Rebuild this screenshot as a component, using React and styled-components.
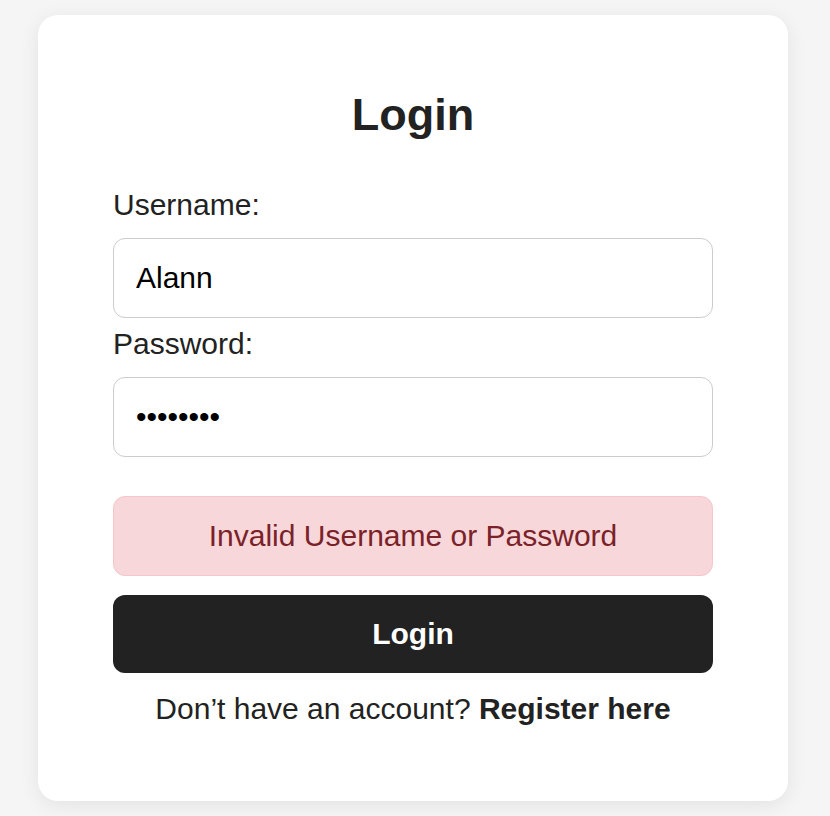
import React, { useState } from "react";
import styled, { createGlobalStyle } from "styled-components";

const GlobalStyle = createGlobalStyle`
  html, body {
    margin: 0;
    padding: 0;
    background: #f5f5f5;
    font-family: "Liberation Sans", Arial, sans-serif;
  }
  * {
    box-sizing: border-box;
  }
`;

const Page = styled.div`
  min-height: 100vh;
  padding: 15px 0 15px 38px;
`;

const Card = styled.div`
  width: 750px;
  background: #ffffff;
  border-radius: 20px;
  box-shadow: 0 4px 20px rgba(0, 0, 0, 0.08);
  padding: 74px 75px 75px;
  color: #222222;
`;

const Title = styled.h2`
  margin: 0 0 47px;
  text-align: center;
  font-size: 45px;
  font-weight: bold;
`;

const Form = styled.form`
  display: flex;
  flex-direction: column;
`;

const Label = styled.label`
  display: block;
  font-size: 30px;
  margin-bottom: 16px;
`;

const Input = styled.input`
  width: 100%;
  height: 80px;
  padding: 0 22px;
  border: 1px solid #cccccc;
  border-radius: 12px;
  font-family: inherit;
  font-size: 30px;
  color: #000000;
  margin-bottom: ${({ $gap }) => $gap}px;
  outline: none;
`;

const ErrorBox = styled.div`
  height: 80px;
  display: flex;
  align-items: center;
  justify-content: center;
  background: #f8d7da;
  border: 1px solid #f5c6cb;
  border-radius: 12px;
  color: #7a2228;
  font-size: 30px;
  margin-bottom: 19px;
`;

const Button = styled.button`
  height: 78px;
  width: 100%;
  border: none;
  border-radius: 12px;
  background: #222222;
  color: #ffffff;
  font-family: inherit;
  font-size: 30px;
  font-weight: bold;
  cursor: pointer;
`;

const Footer = styled.p`
  margin: 19px 0 0;
  text-align: center;
  font-size: 30px;
`;

const RegisterLink = styled.a`
  font-weight: bold;
  color: #222222;
  text-decoration: none;
`;

function App() {
  const [username, setUsername] = useState("Alann");
  const [password, setPassword] = useState("password");

  return (
    <Page>
      <GlobalStyle />
      <Card>
        <Title>Login</Title>
        <Form onSubmit={(e) => e.preventDefault()}>
          <Label htmlFor="username">Username:</Label>
          <Input
            id="username"
            type="text"
            $gap={9}
            value={username}
            onChange={(e) => setUsername(e.target.value)}
          />
          <Label htmlFor="password">Password:</Label>
          <Input
            id="password"
            type="password"
            $gap={39}
            value={password}
            onChange={(e) => setPassword(e.target.value)}
          />
          <ErrorBox>Invalid Username or Password</ErrorBox>
          <Button type="submit">Login</Button>
        </Form>
        <Footer>
          Don’t have an account? <RegisterLink href="#">Register here</RegisterLink>
        </Footer>
      </Card>
    </Page>
  );
}

export default App;
